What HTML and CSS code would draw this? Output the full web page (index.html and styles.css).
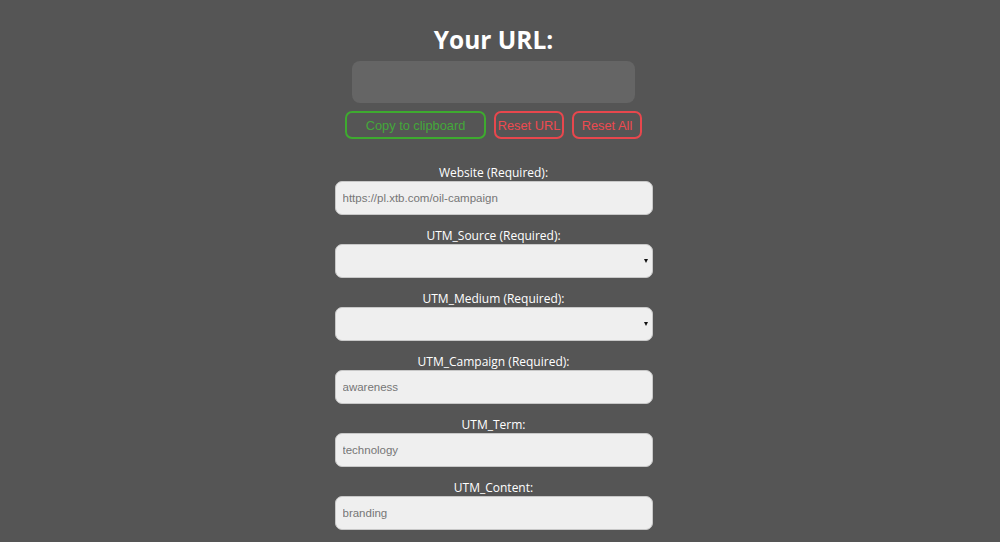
FILE: index.html
```html
<!DOCTYPE html>
<html lang="en">
<head>
<meta charset="utf-8">
<title>UTM Builder</title>
<link rel="stylesheet" href="styles.css">
</head>
<body>
<main class="page">
  <h1 class="title">Your URL:</h1>
  <div class="url-box"></div>
  <div class="actions">
    <button class="btn btn-copy">Copy to clipboard</button>
    <button class="btn btn-reset btn-reset-url">Reset URL</button>
    <button class="btn btn-reset btn-reset-all">Reset All</button>
  </div>
  <form class="form">
    <div class="field">
      <label class="label">Website (Required):</label>
      <input class="input" type="text" placeholder="https://pl.xtb.com/oil-campaign">
    </div>
    <div class="field">
      <label class="label">UTM_Source (Required):</label>
      <div class="select-wrap"><select class="input select"><option></option></select></div>
    </div>
    <div class="field">
      <label class="label">UTM_Medium (Required):</label>
      <div class="select-wrap"><select class="input select"><option></option></select></div>
    </div>
    <div class="field">
      <label class="label">UTM_Campaign (Required):</label>
      <input class="input" type="text" placeholder="awareness">
    </div>
    <div class="field">
      <label class="label">UTM_Term:</label>
      <input class="input" type="text" placeholder="technology">
    </div>
    <div class="field">
      <label class="label">UTM_Content:</label>
      <input class="input" type="text" placeholder="branding">
    </div>
  </form>
</main>
</body>
</html>
```

FILE: styles.css
```css
html, body {
  margin: 0;
  padding: 0;
  background: #555555;
}
body {
  font-family: "Open Sans", "Liberation Sans", sans-serif;
  color: #ffffff;
  overflow: hidden;
}
.page {
  width: 987px;
  display: flex;
  flex-direction: column;
  align-items: center;
  padding-top: 24px;
}
.title {
  margin: 0;
  font-size: 24.5px;
  line-height: 32px;
  font-weight: 700;
  color: #ffffff;
}
.url-box {
  margin-top: 5px;
  width: 283px;
  height: 42px;
  background: #656565;
  border-radius: 8px;
}
.actions {
  margin-top: 8px;
  display: flex;
  gap: 8px;
}
.btn {
  height: 28px;
  padding: 0;
  background: transparent;
  border: 2px solid;
  border-radius: 7px;
  font-family: "Liberation Sans", Arial, sans-serif;
  font-size: 12.8px;
  cursor: pointer;
}
.btn-copy {
  width: 141px;
  border-color: #3eaa2f;
  color: #44a83a;
}
.btn-reset {
  border-color: #e8474d;
  color: #ee4a50;
}
.btn-reset-url { width: 70px; }
.btn-reset-all { width: 70px; }
.form {
  margin-top: 26px;
  display: flex;
  flex-direction: column;
  align-items: center;
  gap: 13px;
}
.field {
  display: flex;
  flex-direction: column;
  align-items: center;
}
.label {
  font-size: 12px;
  line-height: 16px;
  color: #ffffff;
}
.input {
  box-sizing: border-box;
  width: 318px;
  height: 34px;
  margin: 0;
  padding: 0 7px;
  background: #efefef;
  border: 1px solid #c8c8c8;
  border-radius: 7px;
  font-family: "Liberation Sans", Arial, sans-serif;
  font-size: 11.5px;
  color: #333;
  outline: none;
}
.input::placeholder {
  color: #767676;
}
.select-wrap {
  position: relative;
}
.select {
  appearance: none;
  -webkit-appearance: none;
}
.select-wrap::after {
  content: "";
  position: absolute;
  right: 5px;
  top: 15px;
  border-left: 2.5px solid transparent;
  border-right: 2.5px solid transparent;
  border-top: 4px solid #111;
  pointer-events: none;
}
```
